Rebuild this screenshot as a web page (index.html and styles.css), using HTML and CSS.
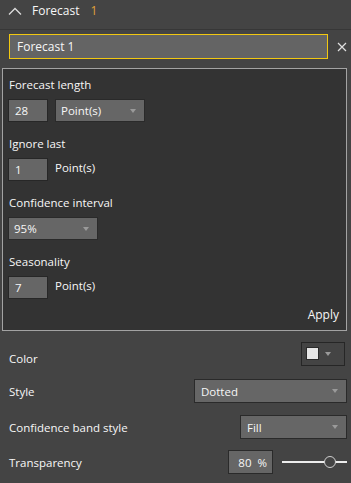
FILE: index.html
```html
<!DOCTYPE html>
<html lang="en">
<head>
    <meta charset="UTF-8">
    <meta name="viewport" content="width=device-width, initial-scale=1.0">
    <title>Forecast</title>
    <link rel="stylesheet" href="styles.css">
</head>
<body>
    <div class="pane">
        <div class="pane-header">
            <svg class="chevron" width="14" height="8" viewBox="0 0 14 8">
                <path d="M1 7.5 L7 1.5 L13 7.5" fill="none" stroke="#dcdcdc" stroke-width="1.3"/>
            </svg>
            <span class="pane-title">Forecast</span>
            <span class="pane-count">1</span>
        </div>

        <div class="name-row">
            <div class="name-input">Forecast 1</div>
            <svg class="close" width="10" height="10" viewBox="0 0 10 10">
                <path d="M1 1 L9 9 M9 1 L1 9" stroke="#e0e0e0" stroke-width="1.2"/>
            </svg>
        </div>

        <div class="forecast-box">
            <div class="field">
                <div class="field-label">Forecast length</div>
                <div class="field-controls">
                    <div class="num-box">28</div>
                    <div class="dropdown dd-small">Point(s)<span class="caret"></span></div>
                </div>
            </div>
            <div class="field">
                <div class="field-label">Ignore last</div>
                <div class="field-controls">
                    <div class="num-box">1</div>
                    <span class="unit">Point(s)</span>
                </div>
            </div>
            <div class="field">
                <div class="field-label">Confidence interval</div>
                <div class="field-controls">
                    <div class="dropdown dd-small">95%<span class="caret"></span></div>
                </div>
            </div>
            <div class="field">
                <div class="field-label">Seasonality</div>
                <div class="field-controls">
                    <div class="num-box">7</div>
                    <span class="unit">Point(s)</span>
                </div>
            </div>
            <div class="apply">Apply</div>
        </div>

        <div class="prop-row row-color">
            <span class="prop-label label-low">Color</span>
            <div class="color-btn"><span class="swatch"></span><span class="caret"></span></div>
        </div>
        <div class="prop-row row-style">
            <span class="prop-label">Style</span>
            <div class="dropdown dd-style">Dotted<span class="caret"></span></div>
        </div>
        <div class="prop-row row-band">
            <span class="prop-label">Confidence band style</span>
            <div class="dropdown dd-band">Fill<span class="caret"></span></div>
        </div>
        <div class="prop-row row-transp">
            <span class="prop-label">Transparency</span>
            <div class="transp-controls">
                <div class="pct-box"><span>80</span><span>%</span></div>
                <div class="slider">
                    <span class="slider-track"></span>
                    <span class="slider-knob"></span>
                </div>
            </div>
        </div>
    </div>
</body>
</html>
```

FILE: styles.css
```css
* {
    box-sizing: border-box;
}
body {
    margin: 0;
    background-color: #444444;
    font-family: "Open Sans", "Noto Sans", Arial, sans-serif;
    font-size: 11.5px;
    color: #f7f7f7;
}
.pane {
    width: 351px;
    height: 483px;
    overflow: hidden;
}
.pane-header {
    display: flex;
    align-items: flex-start;
    height: 30px;
    padding-left: 8px;
    border-bottom: 1px solid #373737;
}
.chevron {
    margin-top: 7px;
    margin-right: 10px;
}
.pane-title {
    line-height: 16px;
    padding-top: 3px;
    font-size: 12px;
}
.pane-count {
    line-height: 16px;
    padding-top: 3px;
    margin-left: 11px;
    font-size: 12px;
    color: #e0a23a;
}
.name-row {
    display: flex;
    align-items: center;
    margin-top: 4px;
    padding-left: 9px;
}
.name-input {
    width: 319px;
    height: 25px;
    line-height: 24px;
    padding-left: 7px;
    font-size: 12px;
    background-color: #646464;
    border: 1px solid #f2c811;
}
.close {
    margin-left: 9px;
}
.forecast-box {
    width: 345px;
    margin: 9px 0 0 2px;
    padding: 8px 5px 7px 5px;
    background-color: #333333;
    border: 1px solid #a3a3a3;
}
.field {
    margin-bottom: 14px;
}
.field-label {
    line-height: 16px;
    padding-left: 1px;
    margin-bottom: 6px;
}
.field-controls {
    display: flex;
    align-items: flex-start;
    gap: 7px;
}
.num-box {
    width: 40px;
    height: 23px;
    line-height: 22px;
    padding-left: 6px;
    background-color: #666666;
    border: 1px solid #272727;
}
.unit {
    line-height: 16px;
    padding-top: 2px;
}
.dropdown {
    position: relative;
    height: 24px;
    line-height: 23px;
    padding-left: 5px;
    background-color: #666666;
    border: 1px solid #2a2a2a;
}
.dd-small {
    width: 90px;
    height: 23px;
    line-height: 22px;
}
.caret {
    position: absolute;
    right: 8px;
    top: 50%;
    margin-top: -2px;
    width: 0;
    height: 0;
    border-left: 3.5px solid transparent;
    border-right: 3.5px solid transparent;
    border-top: 4px solid #9a9a9a;
}
.apply {
    text-align: right;
    line-height: 16px;
    margin-top: -6px;
    padding-right: 2px;
    font-size: 12px;
}
.prop-row {
    display: flex;
    align-items: center;
    justify-content: space-between;
    height: 24px;
    padding-left: 9px;
    padding-right: 4px;
}
.row-color {
    margin-top: 11px;
}
.row-style {
    margin-top: 13px;
}
.row-band {
    margin-top: 12px;
}
.row-transp {
    margin-top: 11px;
}
.prop-label {
    line-height: 16px;
    margin-top: 1px;
}
.prop-label.label-low {
    margin-top: 10px;
}
.color-btn {
    position: relative;
    width: 44px;
    height: 24px;
    margin-right: 2px;
    border: 1px solid #262626;
}
.swatch {
    position: absolute;
    left: 4px;
    top: 4px;
    width: 13px;
    height: 13px;
    background-color: #e6e6e6;
    border: 1px solid #2a2a2a;
}
.color-btn .caret {
    right: 13px;
}
.dd-style {
    width: 153px;
}
.dd-band {
    width: 107px;
}
.dropdown.dd-style,
.dropdown.dd-band {
    padding-left: 6px;
}
.transp-controls {
    display: flex;
    align-items: center;
}
.pct-box {
    display: flex;
    justify-content: flex-end;
    gap: 6px;
    width: 45px;
    height: 24px;
    line-height: 23px;
    padding-right: 5px;
    background-color: #666666;
    border: 1px solid #2a2a2a;
}
.slider {
    position: relative;
    width: 65px;
    height: 14px;
    margin-left: 9px;
}
.slider-track {
    position: absolute;
    left: 0;
    right: 0;
    top: 6px;
    height: 1.5px;
    background-color: #ededed;
}
.slider-knob {
    position: absolute;
    left: 42px;
    top: 1px;
    width: 12px;
    height: 12px;
    border-radius: 50%;
    background-color: #444444;
    border: 1.5px solid #d0d0d0;
}
```
